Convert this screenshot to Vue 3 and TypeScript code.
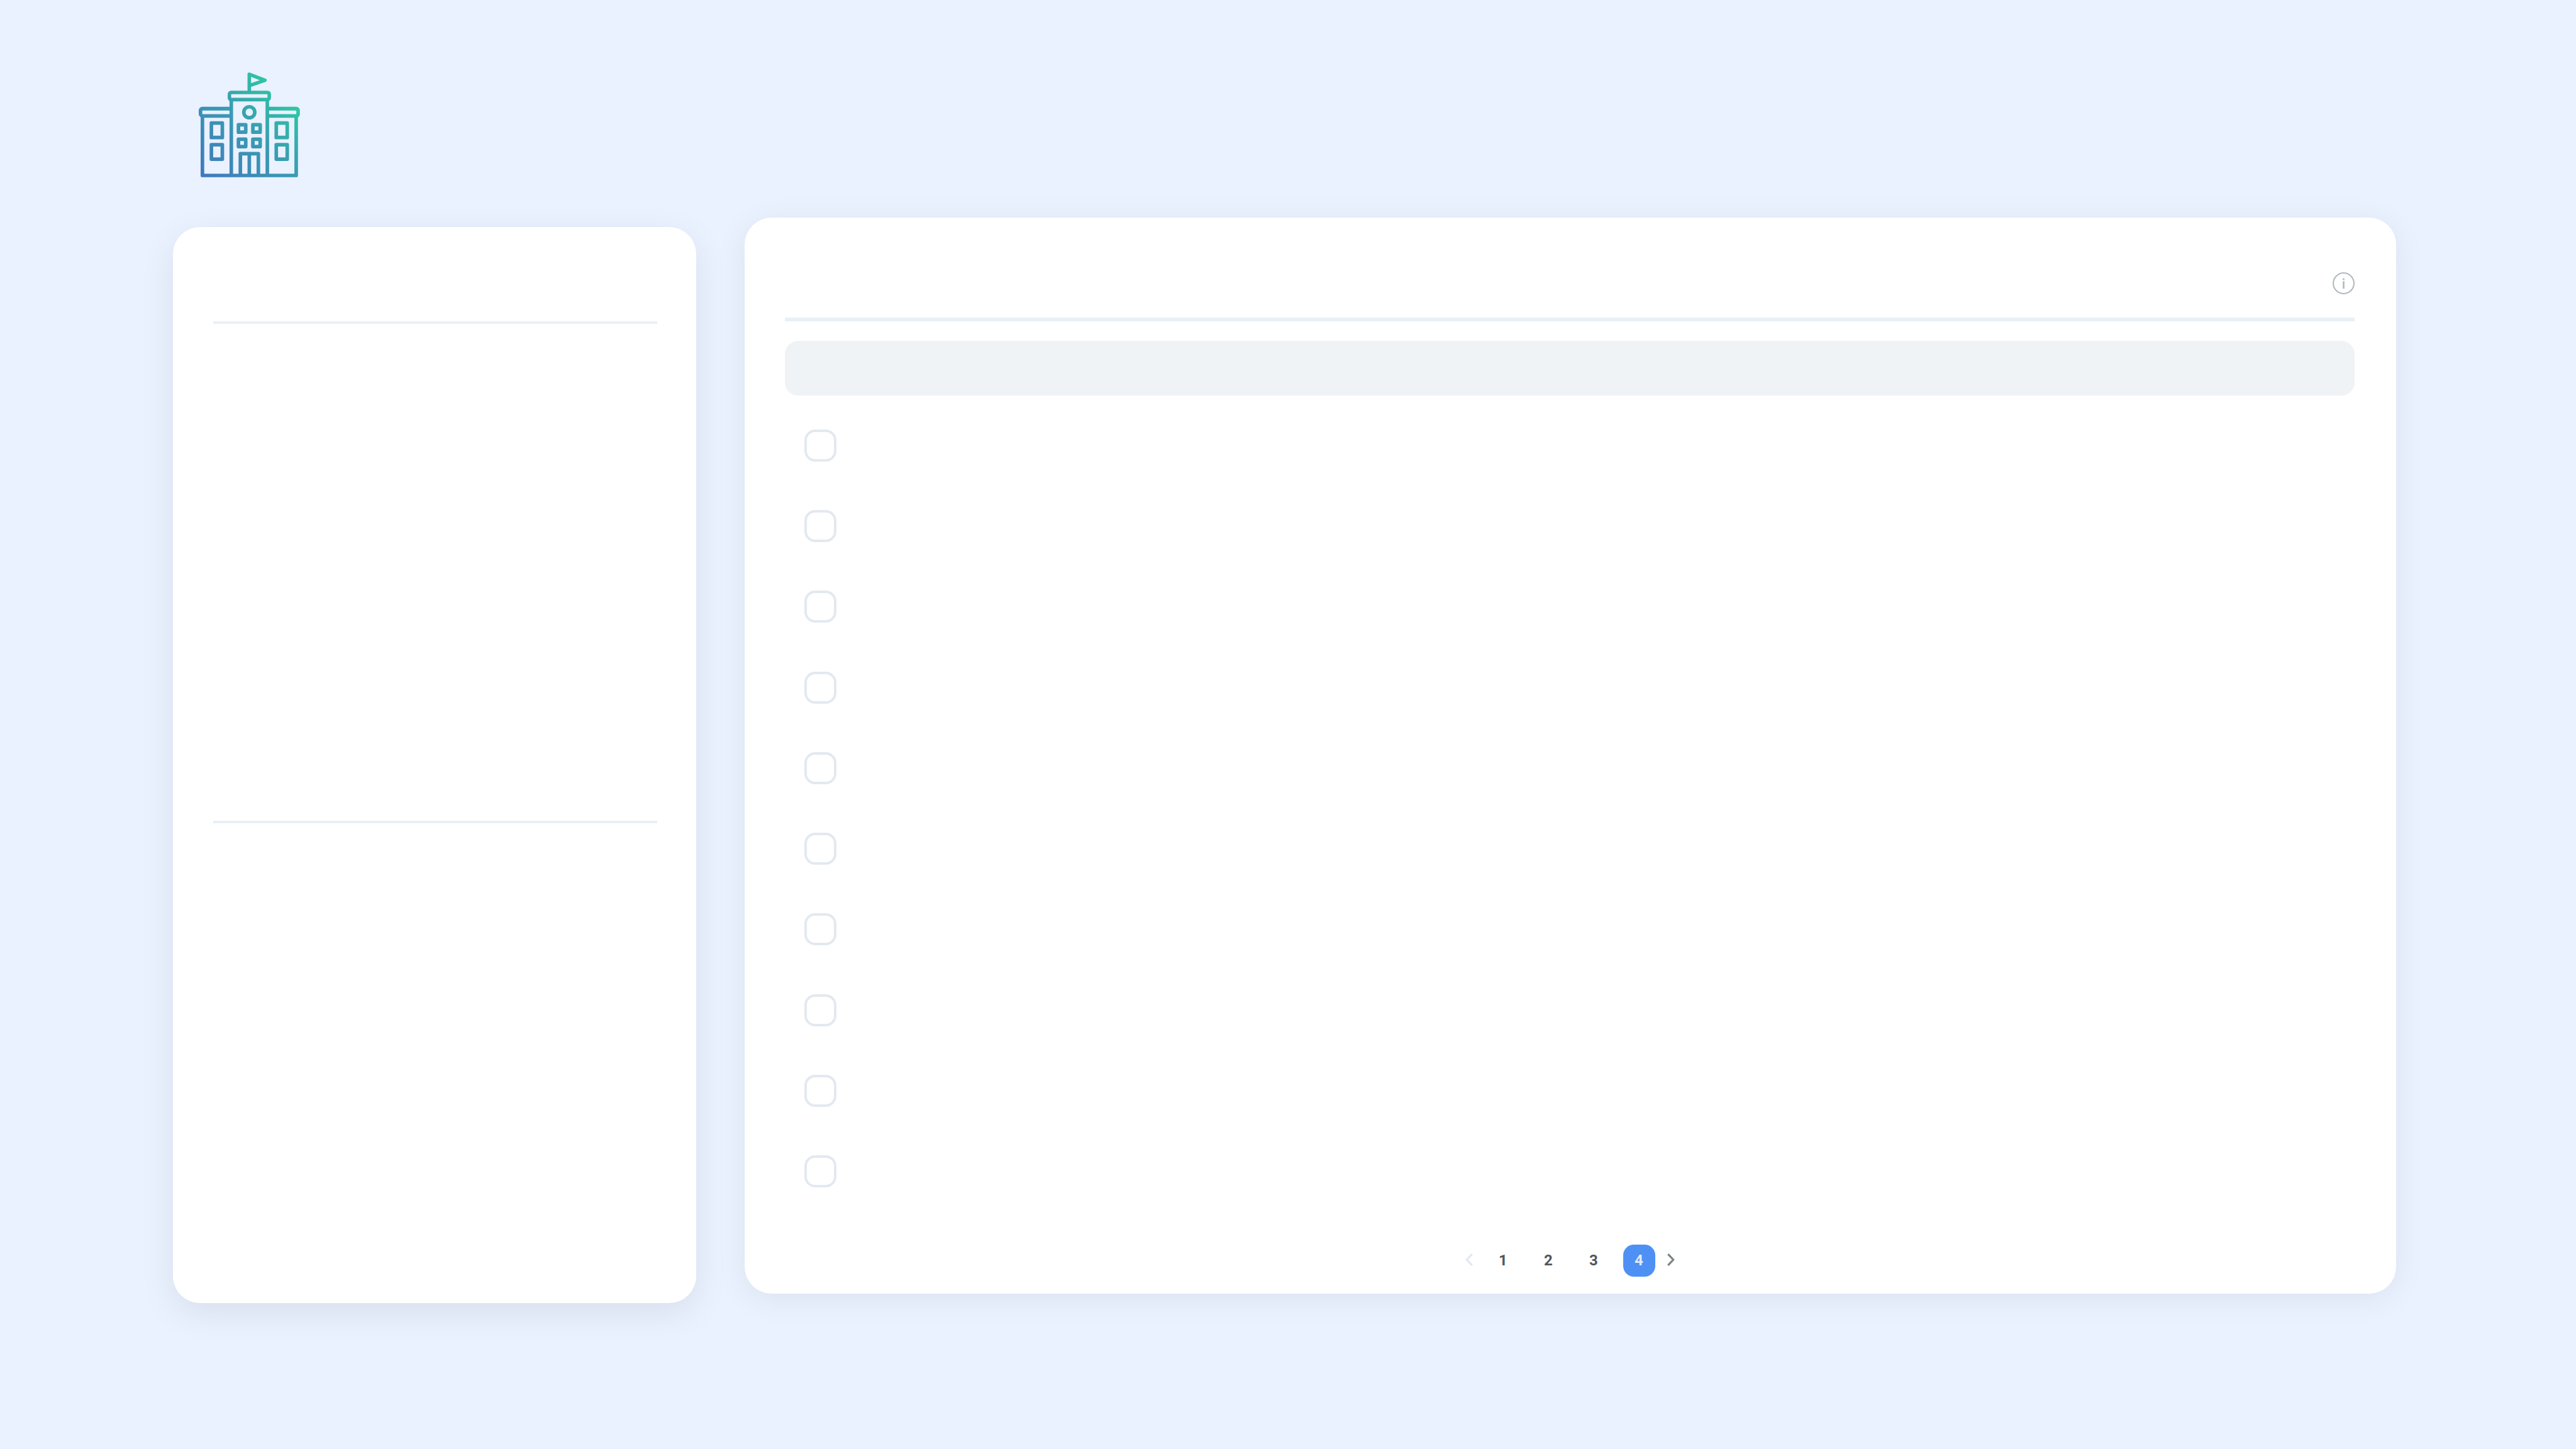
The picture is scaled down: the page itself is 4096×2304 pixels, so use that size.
<script setup lang="ts">
import { ref } from 'vue'

interface Row {
  id: number
  selected: boolean
}

const pages: number[] = [1, 2, 3, 4]
const currentPage = ref<number>(4)
const rows = ref<Row[]>(
  Array.from({ length: 10 }, (_, i) => ({ id: i + 1, selected: false }))
)

function goTo(page: number): void {
  if (page >= 1 && page <= pages.length) currentPage.value = page
}
</script>

<template>
  <div class="page">
    <header class="top">
      <a class="logo" href="#" aria-label="Home">
        <svg viewBox="100 77 905 937" aria-hidden="true">
          <defs>
            <linearGradient id="brand" gradientUnits="userSpaceOnUse" x1="120" y1="1010" x2="870" y2="260">
              <stop offset="0" stop-color="#4178be" />
              <stop offset="0.58" stop-color="#399cb2" />
              <stop offset="1" stop-color="#2ec8a2" />
            </linearGradient>
          </defs>
          <!-- flag, walls and clock -->
          <g fill="none" stroke="url(#brand)" stroke-width="32" stroke-linejoin="round">
            <path d="M552 250V94L692 147L552 195" stroke-linecap="round" />
            <path d="M133 466V998H971V466" />
            <path d="M391 320V998M713 320V998" />
            <circle cx="552" cy="433" r="49" />
            <path d="M472 998V803H633V998M552 803V998" />
          </g>
          <!-- roofs and windows -->
          <g fill="url(#brand)" fill-rule="evenodd">
            <path d="M389 240H716A30 30 0 0 1 746 270V302A34 34 0 0 1 729 332V336H375V332A34 34 0 0 1 359 302V270A30 30 0 0 1 389 240ZM390 272V304H714V272Z" />
            <path d="M391 384H132A32 32 0 0 0 100 416V448A34 34 0 0 0 117 478V482H391V450H132V417H391Z" />
            <path d="M713 384H972A32 32 0 0 1 1004 416V448A34 34 0 0 1 987 478V482H713V450H972V417H713Z" />
          </g>
          <g fill="none" stroke="url(#brand)" stroke-width="32" stroke-linejoin="round">
            <path d="M213 529H311V659H213ZM213 723H311V853H213Z" />
            <path d="M793 529H891V659H793ZM793 723H891V853H793Z" />
            <path d="M455 545H520V611H455ZM584 545H649V611H584Z" />
            <path d="M455 674H520V740H455ZM584 674H649V740H584Z" />
          </g>
        </svg>
      </a>
    </header>

    <main class="columns">
      <aside class="card side">
        <section class="side-head"></section>
        <section class="side-body"></section>
      </aside>

      <section class="card content">
        <div class="content-head">
          <button class="info" type="button" aria-label="Information">
            <svg viewBox="0 0 66 66" aria-hidden="true">
              <circle cx="33" cy="33" r="31" fill="none" stroke="#b2b9bf" stroke-width="4" />
              <path d="M30.500 18h5v5h-5zM30.500 27h5v22h-5z" fill="#b2b9bf" />
            </svg>
          </button>
        </div>
        <div class="band"></div>
        <ul class="rows">
          <li v-for="row in rows" :key="row.id">
            <input v-model="row.selected" class="check" type="checkbox" :aria-label="`Select row ${row.id}`" />
          </li>
        </ul>
        <nav class="pager" aria-label="Pagination">
          <button class="arrow prev" type="button" aria-label="Previous page" @click="goTo(currentPage - 1)">
            <svg viewBox="0 0 22 38" aria-hidden="true"><path d="M20 2L4 19L20 36" /></svg>
          </button>
          <div class="nums">
            <button
              v-for="page in pages"
              :key="page"
              class="num"
              :class="{ active: page === currentPage }"
              type="button"
              @click="goTo(page)"
            >{{ page }}</button>
          </div>
          <button class="arrow next" type="button" aria-label="Next page" @click="goTo(currentPage + 1)">
            <svg viewBox="0 0 22 38" aria-hidden="true"><path d="M2 2L18 19L2 36" /></svg>
          </button>
        </nav>
      </section>
    </main>
  </div>
</template>

<style>
body {
  background: #eaf1ff;
}
</style>

<style scoped>
.page {
  box-sizing: border-box;
  min-height: 100vh;
  padding: 115px 286px 0 275px;
  background: #eaf1ff;
  font-family: "Roboto", "Liberation Sans", sans-serif;
}

button {
  box-sizing: border-box;
  display: flex;
  align-items: center;
  justify-content: center;
  padding: 0;
  border: 0;
  background: none;
  font: inherit;
  cursor: pointer;
}

svg {
  display: block;
  width: 100%;
  height: 100%;
}

.top {
  display: flex;
  padding: 0 41px 64px;
}

.logo {
  width: 161px;
  height: 167px;
}

.columns {
  display: grid;
  grid-template-columns: 832fr 2626fr;
  align-items: start;
  gap: 77px;
}

.card {
  box-sizing: border-box;
  display: flex;
  flex-direction: column;
  min-height: 1711px;
  border-radius: 43px;
  background: #fff;
}

.side {
  margin-top: 15px;
  padding: 0 62px 0 64px;
  box-shadow: 0 16px 56px rgba(0, 0, 0, 0.08);
}

.side-head {
  height: 150px;
  border-bottom: 4px solid #e9f0f6;
}

.side-body {
  height: 790px;
  border-bottom: 4px solid #e9f0f6;
}

.content {
  padding: 0 66px 27px 64px;
  box-shadow: 0 8px 52px rgba(0, 0, 0, 0.065);
}

.content-head {
  display: flex;
  justify-content: flex-end;
  padding: 87px 0 37px;
  border-bottom: 6px solid #e9f0f7;
}

.info {
  width: 35px;
  height: 35px;
}

.band {
  height: 87px;
  margin-top: 31px;
  border-radius: 21px;
  background: #eff3f6;
}

.rows {
  display: flex;
  flex: 1;
  flex-direction: column;
  justify-content: space-between;
  margin: 54px 0 91px;
  padding: 0 31px;
  list-style: none;
}

.rows li {
  display: flex;
}

.check {
  box-sizing: border-box;
  width: 51px;
  height: 51px;
  margin: 0;
  border: 4px solid #e3e9f0;
  border-radius: 17px;
  background: #fff;
  appearance: none;
}

.check:checked {
  background: #4f90f5;
}

.pager {
  display: flex;
  align-items: center;
  justify-content: center;
}

.nums {
  display: flex;
  gap: 21px;
  margin: 0 19px 0 23px;
}

.num {
  width: 51px;
  height: 51px;
  padding-bottom: 2px;
  border-radius: 17px;
  color: #51565c;
  font-size: 24px;
  font-weight: 700;
}

.num.active {
  background: #4f90f5;
  color: #e3e9f0;
}

.arrow {
  width: 12px;
  height: 20px;
  margin-bottom: 3px;
}

.arrow path {
  fill: none;
  stroke: #7d8286;
  stroke-width: 6px;
}

.arrow.prev path {
  stroke: #e3e9f0;
}
</style>
